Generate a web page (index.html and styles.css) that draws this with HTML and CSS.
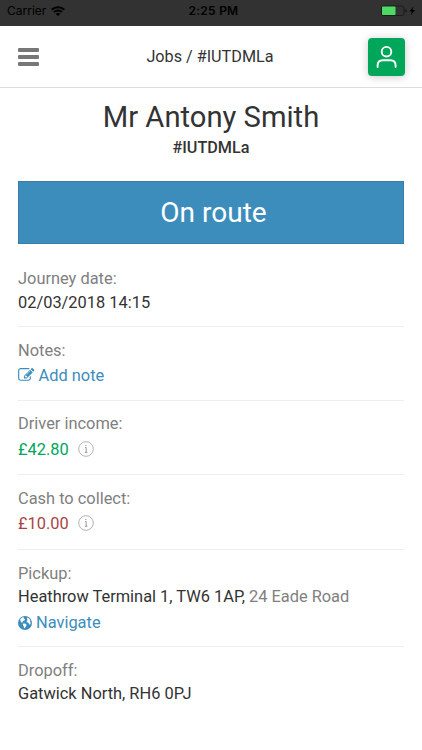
FILE: index.html
```html
<!DOCTYPE html>
<html lang="en">
<head>
<meta charset="utf-8">
<title>Jobs / #IUTDMLa</title>
<link rel="stylesheet" href="styles.css">
</head>
<body>
<div class="status">
  <div class="carrier"><span>Carrier</span>
    <svg width="14" height="10" viewBox="0 0 14 10" fill="none" stroke="#000" stroke-width="2"><path d="M.7 3.7a9 9 0 0 1 12.6 0M3 6.1a5.7 5.7 0 0 1 8 0"/><path d="M7 10 4.9 7.9a3 3 0 0 1 4.2 0z" fill="#000" stroke="none"/></svg>
  </div>
  <div class="time">2:25 PM</div>
  <div class="power">
    <svg width="36" height="12" viewBox="0 0 36 12"><rect x=".5" y="1" width="22.500" height="9.5" rx="2" fill="none" stroke="#151515" stroke-width=".8"/><rect x="1" y="1.500" width="13.5" height="8.500" rx=".8" fill="#4cd964"/><path d="M24.500 4v3.5q1.3-.5 1.3-1.75T24.500 4z" fill="#111"/><path d="M32.500 1.2 28.500 6.4h2.4L29.700 10.4 34 5h-2.6z" fill="#000"/></svg>
  </div>
</div>
<header class="bar">
  <div class="menu"><i></i><i></i><i></i></div>
  <div class="crumb">Jobs / #IUTDMLa</div>
  <div class="user">
    <svg width="37" height="38" viewBox="0 0 37 38" fill="none" stroke="#fff" stroke-width="1.9" stroke-linecap="round"><circle cx="18.5" cy="13.7" r="4.8"/><path d="M9.6 29v-1.5c0-3.2 2-5.2 5.2-5.2h7.6c3.2 0 5.2 2 5.2 5.2V29"/></svg>
  </div>
</header>
<main>
  <h1>Mr Antony Smith</h1>
  <div class="ref">#IUTDMLa</div>
  <div class="state">On route</div>
  <section class="journey">
    <div class="label">Journey date:</div>
    <div class="value">02/03/2018 14:15</div>
  </section>
  <section class="notes">
    <div class="label">Notes:</div>
    <div class="link"><svg class="edit" viewBox="0 128 1792 1536" fill="currentColor"><path d="M888 1184l116-116-152-152-116 116v56h96v96h56zm440-720q-16-16-33 1l-350 350q-17 17-1 33t33-1l350-350q17-17 1-33zm80 594v190q0 119-84.5 203.5t-203.5 84.5h-832q-119 0-203.5-84.5t-84.5-203.5v-832q0-119 84.5-203.5t203.5-84.5h832q63 0 117 25 15 7 18 23 3 17-9 29l-49 49q-14 14-32 8-23-6-45-6h-832q-66 0-113 47t-47 113v832q0 66 47 113t113 47h832q66 0 113-47t47-113v-126q0-13 9-22l64-64q15-15 35-7t20 29zm-96-738l288 288-672 672h-288v-288zm444 132l-92 92-288-288 92-92q28-28 68-28t68 28l152 152q28 28 28 68t-28 68z"/></svg><span>Add note</span></div>
  </section>
  <section class="income">
    <div class="label">Driver income:</div>
    <div class="money green"><span>£42.80</span><svg class="info" viewBox="0 0 16 16"><circle cx="8" cy="8" r="7.3" fill="none" stroke="#aaa" stroke-width=".9"/><path d="M7 6.4h1.2v4.8M6.8 11.3h2.600M7.3 4.4h1.2" fill="none" stroke="#999" stroke-width="1"/></svg></div>
  </section>
  <section class="cash">
    <div class="label">Cash to collect:</div>
    <div class="money red"><span>£10.00</span><svg class="info" viewBox="0 0 16 16"><circle cx="8" cy="8" r="7.3" fill="none" stroke="#aaa" stroke-width=".9"/><path d="M7 6.4h1.2v4.8M6.8 11.3h2.600M7.3 4.4h1.2" fill="none" stroke="#999" stroke-width="1"/></svg></div>
  </section>
  <section class="pickup">
    <div class="label">Pickup:</div>
    <div class="value">Heathrow Terminal 1, TW6 1AP, <span class="muted">24 Eade Road</span></div>
    <div class="link"><svg class="globe" viewBox="0 0 14 14"><circle cx="7" cy="7" r="7" fill="#3c8dbc"/><path d="M2.200 3.200 4.500 1.300 6.200 1.600 5.500 2.700 7 3 6.700 4.300 5.200 5.100 4.300 6 4.600 7 3.400 6.600 2.600 5.300zM5.200 7.500 7 7.400 8.600 8.700 7.900 10.400 6.600 12.300 5.900 11.900 5.700 9.900 4.700 8.800zM9 1.600l2.100.9 1.300 2-.6 1.200.9.600-.3 2-1.200.2-.7-1.700-1.700-.5-.2-1.400 1.300-.8-1-.8z" fill="#fff"/></svg><span>Navigate</span></div>
  </section>
  <section class="dropoff">
    <div class="label">Dropoff:</div>
    <div class="value">Gatwick North, RH6 0PJ</div>
  </section>
</main>
</body>
</html>
```
FILE: styles.css
```css
* { box-sizing: border-box; }
body { margin: 0; height: 750px; overflow: hidden; background: #fff; color: #333; font: 16.4px/24px Roboto, sans-serif; }
svg { display: block; flex: none; }
.status { height: 26px; padding: 0 5px 4px 7px; display: grid; grid-template-columns: 1fr auto 1fr; align-items: center; background: #323232; color: #000; font: 12px/22px Inter, sans-serif; }
.carrier { display: flex; align-items: center; gap: 5px; }
.time { font-weight: 600; letter-spacing: .25px; padding-left: 3px; }
.power { justify-self: end; }
.bar { height: 62px; padding: 0 17px 0 18px; border-bottom: 1px solid #ddd; display: grid; grid-template-columns: 37px 1fr 37px; align-items: center; }
.menu { display: grid; gap: 3px; width: 21px; padding-top: 1px; }
.menu i { height: 4px; background: #777; border-radius: 1px; }
.crumb { padding: 1px 3px 0 0; text-align: center; font-size: 16.2px; }
.user { width: 37px; height: 38px; border-radius: 4px; background: #00a65a; box-shadow: 0 1px 9px rgba(0,0,0,.22); }
main { padding: 0 18px; }
h1 { margin: 11px 0 0; height: 37px; font-size: 29.2px; line-height: 36px; font-weight: 400; text-align: center; }
.ref { height: 24px; font-size: 16.2px; font-weight: 500; text-align: center; }
.state { margin-top: 21px; height: 63px; padding-left: 5px; background: #3c8dbc; color: #fff; font-size: 28px; line-height: 62px; text-align: center; border: 1px solid #367fa9; }
section { border-bottom: 1px solid #eee; padding-top: 12px; }
.journey { height: 83px; padding-top: 23px; }
.journey .value { padding-top: 1px; }
.notes { height: 74px; }
.income { height: 74px; padding-top: 11px; }
.cash { height: 75px; }
.pickup { height: 97px; }
.dropoff { border: 0; }
.label, .muted { color: #808080; }
.label { height: 23px; }
.link, .money { display: flex; align-items: center; height: 24px; margin-top: 2px; }
.income .money { margin-top: 3px; }
.link { color: #3c8dbc; }
.edit { width: 16.5px; height: 14px; margin: -2px 4px 0 0; }
.globe { width: 14px; height: 14px; margin-right: 4px; }
.green { color: #00a65a; }
.red { color: #a94442; }
.info { width: 16px; height: 16px; margin: -3px 0 0 9px; }
```
